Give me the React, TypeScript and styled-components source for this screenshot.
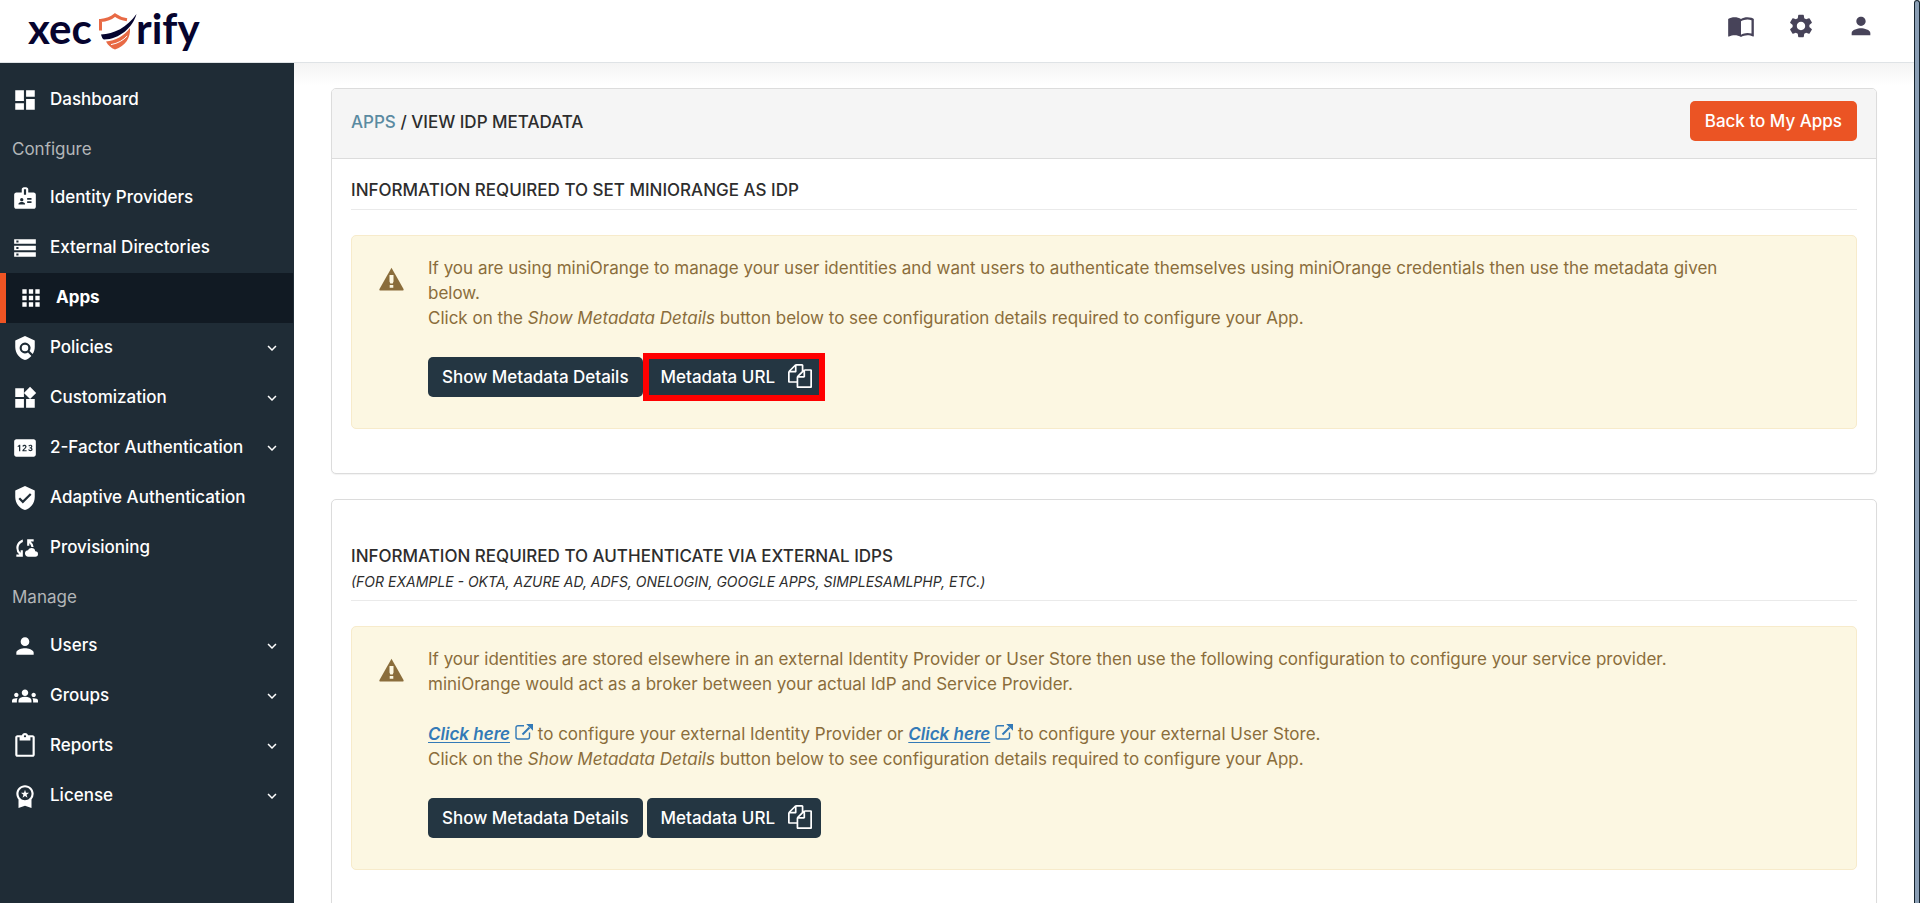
import React from 'react';
import styled, { createGlobalStyle, css } from 'styled-components';
import type { IconType } from 'react-icons';
import {
  MdApps,
  MdBadge,
  MdCloudSync,
  MdContentPaste,
  MdDashboard,
  MdExpandMore,
  MdGroups,
  MdPerson,
  MdPin,
  MdPolicy,
  MdSettings,
  MdStorage,
  MdVerifiedUser,
  MdWidgets,
  MdWorkspacePremium,
} from 'react-icons/md';

const GlobalStyle = createGlobalStyle`
  *, *::before, *::after { box-sizing: border-box; }
  body {
    margin: 0;
    background: #fff;
    color: #2d2d2d;
    font-family: Inter, "Liberation Sans", sans-serif;
    font-size: 17px;
    line-height: 25px;
  }
  button { font: inherit; cursor: pointer; }
  h1, h2, p, ul { margin: 0; padding: 0; }
`;

const Page = styled.div`
  display: flex;
  height: 100vh;
  overflow: hidden;
`;

const Shell = styled.div`
  display: flex;
  flex: 1;
  flex-direction: column;
  min-width: 0;
`;

const ScrollTrack = styled.div`
  flex: none;
  width: 6px;
  border: solid #14232e;
  border-width: 1px 1px 0;
  border-top-left-radius: 3px;
  border-top-right-radius: 3px;
  background: #8a9eb4;
`;

const TopBar = styled.header`
  display: flex;
  flex: none;
  align-items: center;
  justify-content: space-between;
  height: 63px;
  padding: 0 39px 0 24px;
  border-bottom: 1px solid #dfe3e6;
  background: #fff;
`;

const LogoLink = styled.a`
  display: flex;
  color: #06042e;

  svg { overflow: visible; }
`;

const LogoText = styled.text`
  font-family: Lato, "Liberation Sans", sans-serif;
  font-size: 42px;
  font-weight: 700;
  fill: currentColor;
`;

const TopActions = styled.div`
  display: flex;
  gap: 32px;
  padding-bottom: 10px;
`;

const IconButton = styled.button`
  display: flex;
  padding: 0;
  border: 0;
  background: none;
  color: #474359;
`;

const Body = styled.div`
  display: flex;
  flex: 1;
  min-height: 0;
`;

const Sidebar = styled.nav`
  flex: none;
  width: 294px;
  padding-top: 12px;
  background: #1f2c36;
`;

const SidebarHeading = styled.h2`
  height: 48px;
  padding-left: 12px;
  color: #b3b6b8;
  font-size: 17px;
  font-weight: 400;
  line-height: 48px;
`;

const NavList = styled.ul`
  list-style: none;
`;

const NavItem = styled.a<{ $active?: boolean }>`
  display: flex;
  align-items: center;
  height: 50px;
  padding: 0 13px 0 12px;
  color: #fff;
  font-weight: 500;
  text-decoration: none;

  svg { flex: none; }

  ${({ $active }) =>
    $active &&
    css`
      margin-right: 1px;
      border-left: 6px solid #f05423;
      background: #111a23;
      font-weight: 700;
    `}
`;

const NavLabel = styled.span`
  flex: 1;
  margin-left: 12px;
  padding-bottom: 2px;
  white-space: nowrap;
`;

const Main = styled.main`
  display: flex;
  flex: 1;
  flex-direction: column;
  gap: 25px;
  min-width: 0;
  padding: 25px 37px;
  overflow: hidden;
  background: linear-gradient(#f4f4f4, #fff 22px);
`;

const Card = styled.section`
  flex: none;
  border: 1px solid #dcdcdc;
  border-radius: 5px;
  background: #fff;
  box-shadow: 0 1px 1px rgba(0, 0, 0, 0.05);
`;

const CardHeader = styled.div`
  display: flex;
  align-items: flex-start;
  justify-content: space-between;
  height: 70px;
  padding: 12px 19px 0;
  border-bottom: 1px solid #dcdcdc;
  border-radius: 4px 4px 0 0;
  background: #f5f5f5;
`;

const Breadcrumb = styled.h1`
  padding-top: 9px;
  font-size: 17px;
  font-weight: 500;
  text-transform: uppercase;

  a {
    color: #5a8aa1;
    text-decoration: none;
  }
`;

const CardBody = styled.div<{ $spacious?: boolean }>`
  padding: ${({ $spacious }) => ($spacious ? 44 : 19)}px 19px 44px;
`;

const SectionTitle = styled.h2`
  margin-bottom: 25px;
  padding-bottom: 6px;
  border-bottom: 1px solid #eaeaea;
  font-size: 17px;
  font-weight: 500;
  text-transform: uppercase;

  small {
    display: block;
    font-size: 14px;
    font-style: italic;
    font-weight: 400;
  }
`;

const Notice = styled.div`
  display: flex;
  gap: 23px;
  padding: 20px 100px 31px 26px;
  border: 1px solid #f7ebcb;
  border-radius: 5px;
  background: #fcf7e2;
  color: #8a6d3b;

  > svg {
    flex: none;
    margin-top: 11px;
  }
`;

const NoticeLink = styled.a`
  color: #337ab7;
  font-style: italic;
  font-weight: 600;
  text-underline-offset: 2px;

  svg {
    margin-left: 5px;
  }
`;

const ButtonRow = styled.div`
  display: flex;
  gap: 4px;
  margin-top: 26px;
`;

const Button = styled.button<{ $tone: 'navy' | 'orange' }>`
  display: flex;
  align-items: center;
  height: 40px;
  padding: 0 ${({ $tone }) => ($tone === 'navy' ? 14 : 15)}px;
  border: 0;
  border-radius: 5px;
  background: ${({ $tone }) => ($tone === 'navy' ? '#243642' : '#eb5424')};
  color: #fff;
  font-weight: 500;
  white-space: nowrap;
`;

const CopyButton = styled(Button)<{ $marked?: boolean }>`
  gap: 13px;
  padding-right: 9px;

  svg { margin-bottom: 2px; }

  ${({ $marked }) =>
    $marked &&
    css`
      border-radius: 0;
      outline: 6px solid #f00;
      outline-offset: -2px;
    `}
`;

const Logo = () => (
  <svg width="184" height="62" viewBox="24 0 184 62" role="img" aria-label="xecurify">
    <LogoText x="28" y="44">xec</LogoText>
    <path
      d="M100.500 30.500V20.500c6-.5 11-2.500 14.500-5.500 3 2.300 7 4 12 4.800"
      fill="none"
      stroke="#e86a45"
      strokeWidth="3"
    />
    <path
      d="M101 34.500c13-.5 26-7 35.500-20.500-3.500 13-17 25.500-32.500 25.500-1.300 0-2.300-2.500-3-5z"
      fill="#06042e"
    />
    <path
      d="M106 41.500c9-.5 18.500-6 24-13.500.6 10-4.500 18-15 21.600-4-1.600-7-4.300-9-8.100z"
      fill="#e86a45"
    />
    <path d="M111 44.600c7-1.200 12.500-4.500 16.200-8.600" fill="none" stroke="#fff" strokeWidth="1" />
    <LogoText x="136" y="44">rify</LogoText>
  </svg>
);

const BookIcon = () => (
  <svg width="28" height="28" viewBox="0 0 24 24" fill="currentColor" aria-hidden="true">
    <path d="M21 5c-1.110-.35-2.330-.5-3.500-.5-1.950 0-4.050.4-5.500 1.500-1.450-1.100-3.550-1.500-5.500-1.500S2.450 4.900 1 6v14.650c0 .25.25.5.5.5.1 0 .15-.05.25-.05C3.100 20.450 5.050 20 6.500 20c1.950 0 4.050.4 5.500 1.500 1.350-.85 3.800-1.500 5.500-1.500 1.650 0 3.350.3 4.750 1.050.1.050.15.050.25.050.25 0 .5-.25.5-.5V6c-.6-.45-1.250-.75-2-1zm0 13.500c-1.100-.35-2.300-.5-3.500-.5-1.700 0-4.150.65-5.500 1.500V8c1.350-.85 3.800-1.500 5.500-1.500 1.200 0 2.400.15 3.500.5v11.500z" />
  </svg>
);

const WarningIcon = () => (
  <svg width="27" height="24" viewBox="0 0 27 24" aria-hidden="true">
    <path
      d="M13.500.8 25.500 22c.4.8 0 1.500-.8 1.500H2.300c-.8 0-1.200-.7-.8-1.500z"
      fill="#8a6d3b"
    />
    <path d="M11.500 8h4v6.500l-.8 2h-2.400l-.8-2zM11.700 18h3.600v2.800h-3.600z" fill="#fcf7e2" />
  </svg>
);

const CopyIcon = () => (
  <svg width="24" height="24" viewBox="0 0 1792 1792" fill="currentColor" aria-hidden="true">
    <path d="M1696 384q40 0 68 28t28 68v1216q0 40-28 68t-68 28h-960q-40 0-68-28t-28-68v-288h-544q-40 0-68-28t-28-68v-672q0-40 20-88t48-76l408-408q28-28 76-48t88-20h416q40 0 68 28t28 68v328q68-40 128-40h416zm-544 213l-299 299h299v-299zm-640-384l-299 299h299v-299zm196 647l316-316v-416h-384v416q0 40-28 68t-68 28h-416v640h512v-256q0-40 20-88t48-76zm956 804v-1152h-384v416q0 40-28 68t-68 28h-416v640h896z" />
  </svg>
);

const ExternalIcon = () => (
  <svg width="18" height="16" viewBox="0 0 18 16" fill="none" stroke="currentColor" aria-hidden="true">
    <path d="M9 1.700H3a2 2 0 0 0-2 2V13a2 2 0 0 0 2 2h9.500a2 2 0 0 0 2-2V8.500" strokeWidth="1.400" />
    <path d="M7.500 10.500 14.500 3.500" strokeWidth="2" />
    <path d="M11.200 0H18v6.800z" fill="currentColor" stroke="none" />
  </svg>
);

type Entry = { label: string; icon: IconType; active?: boolean; expandable?: boolean };

const general: Entry[] = [{ label: 'Dashboard', icon: MdDashboard }];

const configure: Entry[] = [
  { label: 'Identity Providers', icon: MdBadge },
  { label: 'External Directories', icon: MdStorage },
  { label: 'Apps', icon: MdApps, active: true },
  { label: 'Policies', icon: MdPolicy, expandable: true },
  { label: 'Customization', icon: MdWidgets, expandable: true },
  { label: '2-Factor Authentication', icon: MdPin, expandable: true },
  { label: 'Adaptive Authentication', icon: MdVerifiedUser },
  { label: 'Provisioning', icon: MdCloudSync },
];

const manage: Entry[] = [
  { label: 'Users', icon: MdPerson, expandable: true },
  { label: 'Groups', icon: MdGroups, expandable: true },
  { label: 'Reports', icon: MdContentPaste, expandable: true },
  { label: 'License', icon: MdWorkspacePremium, expandable: true },
];

const NavGroup = ({ entries }: { entries: Entry[] }) => (
  <NavList>
    {entries.map(({ label, icon: Icon, active, expandable }) => (
      <li key={label}>
        <NavItem href="#" $active={active} aria-current={active ? 'page' : undefined}>
          <Icon size={26} />
          <NavLabel>{label}</NavLabel>
          {expandable && <MdExpandMore size={18} />}
        </NavItem>
      </li>
    ))}
  </NavList>
);

const MetadataActions = ({ marked }: { marked?: boolean }) => (
  <ButtonRow>
    <Button type="button" $tone="navy">Show Metadata Details</Button>
    <CopyButton type="button" $tone="navy" $marked={marked}>
      Metadata URL
      <CopyIcon />
    </CopyButton>
  </ButtonRow>
);

export default function App() {
  return (
    <Page>
      <GlobalStyle />
      <Shell>
        <TopBar>
          <LogoLink href="#"><Logo /></LogoLink>
          <TopActions>
            <IconButton type="button" aria-label="Documentation"><BookIcon /></IconButton>
            <IconButton type="button" aria-label="Settings"><MdSettings size={28} /></IconButton>
            <IconButton type="button" aria-label="Account"><MdPerson size={28} /></IconButton>
          </TopActions>
        </TopBar>
        <Body>
          <Sidebar>
            <NavGroup entries={general} />
            <SidebarHeading>Configure</SidebarHeading>
            <NavGroup entries={configure} />
            <SidebarHeading>Manage</SidebarHeading>
            <NavGroup entries={manage} />
          </Sidebar>
          <Main>
            <Card>
              <CardHeader>
                <Breadcrumb><a href="#">Apps</a> / View IDP Metadata</Breadcrumb>
                <Button type="button" $tone="orange">Back to My Apps</Button>
              </CardHeader>
              <CardBody>
                <SectionTitle>Information required to set miniOrange as IDP</SectionTitle>
                <Notice>
                  <WarningIcon />
                  <div>
                    <p>
                      If you are using miniOrange to manage your user identities and want users to
                      authenticate themselves using miniOrange credentials then use the metadata
                      given below.
                    </p>
                    <p>
                      Click on the <em>Show Metadata Details</em> button below to see configuration
                      details required to configure your App.
                    </p>
                    <MetadataActions marked />
                  </div>
                </Notice>
              </CardBody>
            </Card>
            <Card>
              <CardBody $spacious>
                <SectionTitle>
                  Information required to authenticate via external IDPs
                  <small>
                    (for example - Okta, Azure AD, ADFS, OneLogin, Google Apps, simpleSAMLphp, etc.)
                  </small>
                </SectionTitle>
                <Notice>
                  <WarningIcon />
                  <div>
                    <p>
                      If your identities are stored elsewhere in an external Identity Provider or
                      User Store then use the following configuration to configure your service
                      provider.
                      <br />
                      miniOrange would act as a broker between your actual IdP and Service Provider.
                    </p>
                    <br />
                    <p>
                      <NoticeLink href="#">Click here<ExternalIcon /></NoticeLink> to configure your
                      external Identity Provider or{' '}
                      <NoticeLink href="#">Click here<ExternalIcon /></NoticeLink> to configure your
                      external User Store.
                      <br />
                      Click on the <em>Show Metadata Details</em> button below to see configuration
                      details required to configure your App.
                    </p>
                    <MetadataActions />
                  </div>
                </Notice>
              </CardBody>
            </Card>
          </Main>
        </Body>
      </Shell>
      <ScrollTrack />
    </Page>
  );
}
